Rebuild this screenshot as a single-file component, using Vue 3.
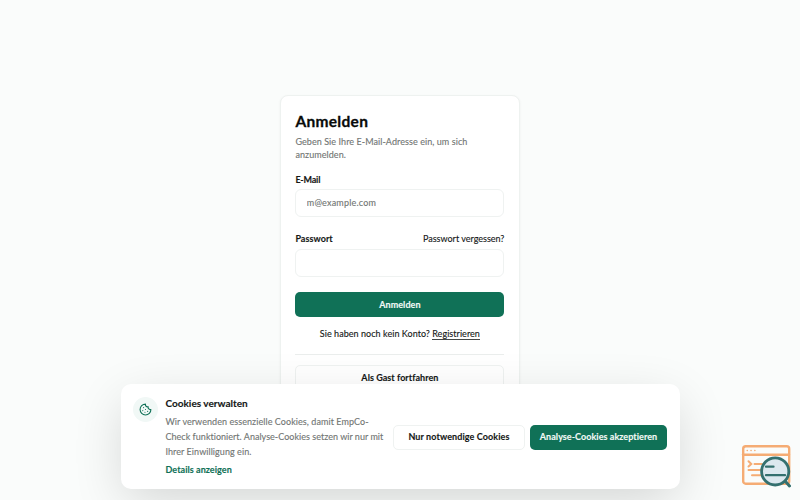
<script setup>
import { ref } from 'vue'

const email = ref('')
const password = ref('')
</script>

<template>
  <main class="page">
    <section class="card">
      <h1><span>Anmelden</span></h1>
      <p class="intro"><span class="i1">Geben Sie Ihre E-Mail-Adresse ein, um sich</span><br /><span class="i2">anzumelden.</span></p>
      <form @submit.prevent>
        <div class="row"><label for="email" class="lmail">E-Mail</label></div>
        <input id="email" v-model="email" type="email" placeholder="m@example.com" />
        <div class="row second"><label for="pw" class="lpw">Passwort</label><a class="forgot">Passwort vergessen?</a></div>
        <input id="pw" v-model="password" type="password" />
        <button class="btn primary login"><span>Anmelden</span></button>
      </form>
      <p class="register"><span>Sie haben noch kein Konto? <a>Registrieren</a></span></p>
      <div class="divider"></div>
      <button class="btn outline guest"><span>Als Gast fortfahren</span></button>
    </section>

    <aside class="banner">
      <div class="badge">
        <svg viewBox="0 0 24 24" fill="none" stroke="currentColor" stroke-width="2" stroke-linecap="round" stroke-linejoin="round">
          <path d="M12 2a10 10 0 1 0 10 10 4 4 0 0 1-5-5 4 4 0 0 1-5-5" />
          <path d="M8.5 8.5v.01M16 15.5v.01M12 12v.01M11 17v.01M7 14v.01" />
        </svg>
      </div>
      <div class="copy">
        <h2><span>Cookies verwalten</span></h2>
        <p><span class="c1">Wir verwenden essenzielle Cookies, damit EmpCo-</span><br /><span class="c2">Check funktioniert. Analyse-Cookies setzen wir nur mit</span><br /><span class="c3">Ihrer Einwilligung ein.</span></p>
        <a class="details">Details anzeigen</a>
      </div>
      <div class="actions">
        <button class="btn outline necessary"><span>Nur notwendige Cookies</span></button>
        <button class="btn primary accept"><span>Analyse-Cookies akzeptieren</span></button>
      </div>
    </aside>

    <svg class="widget" viewBox="0 0 50 45" fill="none" stroke-linecap="round">
      <g stroke="#f5ac74" stroke-width="2.4">
        <rect x="2.2" y="2.3" width="46" height="37.4" rx="2.5" />
        <path d="M2 10.8H48" />
        <path d="M6.2 6.5h.1M10 6.5h.1M13.8 6.5h.1" stroke-width="1.5" />
        <path d="M7.5 17.3l2.8 2.6-2.8 2.6M13.5 20H21M7.5 26H20M11 31.3H22" stroke-width="2" />
      </g>
      <circle cx="34.2" cy="27.4" r="13.6" fill="#dce8ef" stroke="#34706f" stroke-width="2.8" />
      <path d="M25 22.7H32.5M25 31.2H44" stroke="#34706f" stroke-width="2.3" />
      <path d="M44.5 37.5L48.5 42" stroke="#34706f" stroke-width="3" />
    </svg>
  </main>
</template>

<style>
body { background: #fafcfb; overflow: hidden; }
</style>

<style scoped>
* { box-sizing: border-box; }
.page {
  width: 800px; height: 500px; overflow: hidden; position: relative;
  padding-top: 95px; background: #fafcfb; color: #151817;
  font-family: Lato, "Liberation Sans", sans-serif; font-size: 9px; line-height: 12.5px;
  letter-spacing: .05px; font-variant-ligatures: none; -webkit-text-stroke: .12px;
}
h1, h2, p { margin: 0; }
button, input { font: inherit; color: inherit; letter-spacing: inherit; margin: 0; }
.card {
  width: 240px; height: 310px; margin: 0 auto; padding: 15px 14.6px 14px 14.4px;
  background: #fff; border: 1px solid #eef2f0; border-radius: 8px;
  box-shadow: 0 1px 3px rgba(0, 0, 0, .05);
}
h1 { font-size: 15.5px; line-height: 20px; font-weight: 700; letter-spacing: .3px; color: #080b0a; -webkit-text-stroke: .3px; }
.intro { margin-top: 5px; color: #717573; white-space: nowrap; letter-spacing: .07px; }
.row { display: flex; justify-content: space-between; align-items: center; height: 12px; margin-top: 13.5px; margin-bottom: 2px; white-space: nowrap; }
.row.second { margin-top: 17px; margin-bottom: 3px; }
label { font-weight: 700; }
.lmail { letter-spacing: -.2px; }
.forgot { letter-spacing: 0; }
input { display: block; width: 100%; height: 28px; padding: 0 10px 0 10.4px; border: 1px solid #eff2f1; border-radius: 6px; background: #fff; outline: none; letter-spacing: .2px; }
input::placeholder { color: #717573; opacity: 1; }
.btn { display: flex; align-items: center; justify-content: center; height: 25px; padding: 0; border-radius: 5px; border: 0; white-space: nowrap; font-weight: 700; }
.primary { background: #107157; color: #f2f9f6; }
.outline { background: #fff; border: 1px solid #eff2f1; }
.login, .guest { width: 100%; }
.login { margin-top: 15px; padding-top: 2px; }
.register { margin-top: 11.2px; height: 13px; text-align: center; white-space: nowrap; }
.register a { display: inline-block; line-height: 11.5px; border-bottom: 1px solid #444847; }
.divider { height: 1px; margin: 13.3px 0 10px; background: #ebeeed; }
.guest { padding-top: 1px; }
.banner {
  position: absolute; left: 120.5px; top: 384.4px; width: 559px; height: 105px;
  display: flex; padding: 12.9px 12.5px 12.3px; border-radius: 10px; background: #fff;
  box-shadow: 0 15px 52px -4px rgba(0, 0, 0, .16);
}
.badge { width: 25px; height: 25px; flex: none; border-radius: 50%; background: #f1f8f6; color: #107157; display: flex; align-items: center; justify-content: center; }
.badge svg { width: 13px; height: 13px; }
.copy { width: 220px; margin-left: 7.5px; flex: none; white-space: nowrap; }
h2 { font-size: 10px; line-height: 13px; font-weight: 700; letter-spacing: 0; }
.copy p { color: #717573; line-height: 15px; margin-top: 4px; letter-spacing: .065px; }
.c2 { letter-spacing: .025px; }
.details { display: block; margin-top: 4.8px; line-height: 12px; font-weight: 700; color: #107157; }
.actions { margin-left: auto; display: flex; gap: 5px; align-items: center; }
.necessary { width: 132px; letter-spacing: .1px; }
.accept { width: 137px; }
.widget { position: absolute; left: 741px; top: 444px; width: 50px; height: 45px; }
</style>
